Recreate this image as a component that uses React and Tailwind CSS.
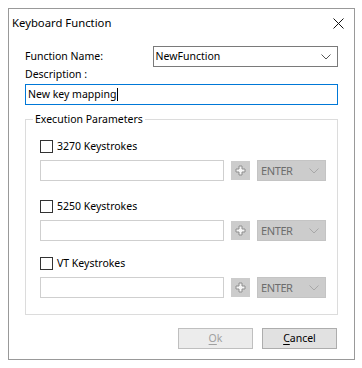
import { useState } from "react";

const FONT = { fontFamily: '"Noto Sans", "Open Sans", Arial, sans-serif' };

function Chevron({ color = "#333" }) {
  return (
    <svg width="10" height="6" viewBox="0 0 10 6" className="shrink-0">
      <path d="M0.5 0.5 L5 5 L9.5 0.5" fill="none" stroke={color} strokeWidth="1" />
    </svg>
  );
}

function PlusBox() {
  return (
    <div className="w-[19px] h-[19px] bg-[#cccccc] flex items-center justify-center shrink-0">
      <svg width="11" height="11" viewBox="0 0 11 11">
        <path
          d="M4 1 H7 V4 H10 V7 H7 V10 H4 V7 H1 V4 H4 Z"
          fill="#f4f4f4"
          stroke="#8e8e8e"
          strokeWidth="1"
        />
      </svg>
    </div>
  );
}

function KeystrokeGroup({ label, top }) {
  const [checked, setChecked] = useState(false);
  return (
    <div className={top}>
      <label className="flex items-center h-[13px] gap-[4px] cursor-default">
        <span
          onClick={() => setChecked(!checked)}
          className="w-[13px] h-[13px] border border-[#333333] bg-white shrink-0 flex items-center justify-center text-[10px] leading-none"
        >
          {checked ? "✓" : ""}
        </span>
        <span className="text-[10.5px] leading-none text-black">{label}</span>
      </label>
      <div className="flex items-center mt-[7px] h-[21px]">
        <div className="w-[184px] h-[21px] border border-[#cfcfcf] bg-white" />
        <div className="ml-[7px]">
          <PlusBox />
        </div>
        <div className="ml-[7px] w-[69px] h-[21px] bg-[#cccccc] border border-[#c4c4c4] flex items-center justify-between pl-[3px] pr-[6px]">
          <span className="text-[11px] leading-none text-[#6d6d6d] tracking-[-0.4px]">ENTER</span>
          <Chevron color="#a8a8a8" />
        </div>
      </div>
    </div>
  );
}

export default function App() {
  return (
    <div className="w-[362px] h-[368px] bg-white pt-[8px] pl-[8px]" style={FONT}>
      <div className="w-[347px] h-[352px] border border-[#999999] bg-white flex flex-col">
        {/* Title bar */}
        <div className="h-[28px] flex items-center justify-between pl-[3px] pr-[10px]">
          <span className="text-[11.3px] text-black leading-none">Keyboard Function</span>
          <svg width="11" height="11" viewBox="0 0 11 11">
            <path d="M0.5 0.5 L10.5 10.5 M10.5 0.5 L0.5 10.5" stroke="#111" strokeWidth="1" />
          </svg>
        </div>

        <div className="pl-[16px] pr-[16px]">
          {/* Function name */}
          <div className="flex items-center mt-[9px] h-[21px]">
            <span className="w-[128px] text-[10.5px] leading-none text-black">Function Name:</span>
            <div className="w-[186px] h-[21px] border border-[#7a7a7a] flex items-center justify-between pl-[2px] pr-[6px]">
              <span className="text-[10.5px] leading-none text-black">NewFunction</span>
              <Chevron color="#555" />
            </div>
          </div>

          <div className="h-[14px] flex items-center text-[10.5px] leading-none text-black">
            Description :
          </div>

          <div className="mt-[3px] w-[313px] h-[21px] border border-[#0078d7] flex items-center pl-[2px]">
            <span className="text-[10.5px] leading-none text-black">New key mapping</span>
            <span className="w-px h-[13px] bg-black ml-px" />
          </div>

          {/* Execution parameters group */}
          <fieldset className="mt-[6px] w-[313px] border border-[#dcdcdc] p-0 m-0">
            <legend className="ml-[7px] px-[2px] text-[10.5px] leading-[16px] text-black">
              Execution Parameters
            </legend>
            <div className="pl-[14px] pb-[16px]">
              <KeystrokeGroup label="3270 Keystrokes" top="mt-[13px]" />
              <KeystrokeGroup label="5250 Keystrokes" top="mt-[19px]" />
              <KeystrokeGroup label="VT Keystrokes" top="mt-[16px]" />
            </div>
          </fieldset>

          {/* Buttons */}
          <div className="flex justify-end gap-[9px] mt-[13px] pr-[1px]">
            <button className="w-[75px] h-[21px] border border-[#bfbfbf] bg-[#ececec] text-[10.5px] leading-none text-[#a0a0a0]">
              <span className="underline underline-offset-2">O</span>k
            </button>
            <button className="w-[75px] h-[21px] border border-[#adadad] bg-[#e1e1e1] text-[10.5px] leading-none text-black">
              <span className="underline underline-offset-2">C</span>ancel
            </button>
          </div>
        </div>
      </div>
    </div>
  );
}
